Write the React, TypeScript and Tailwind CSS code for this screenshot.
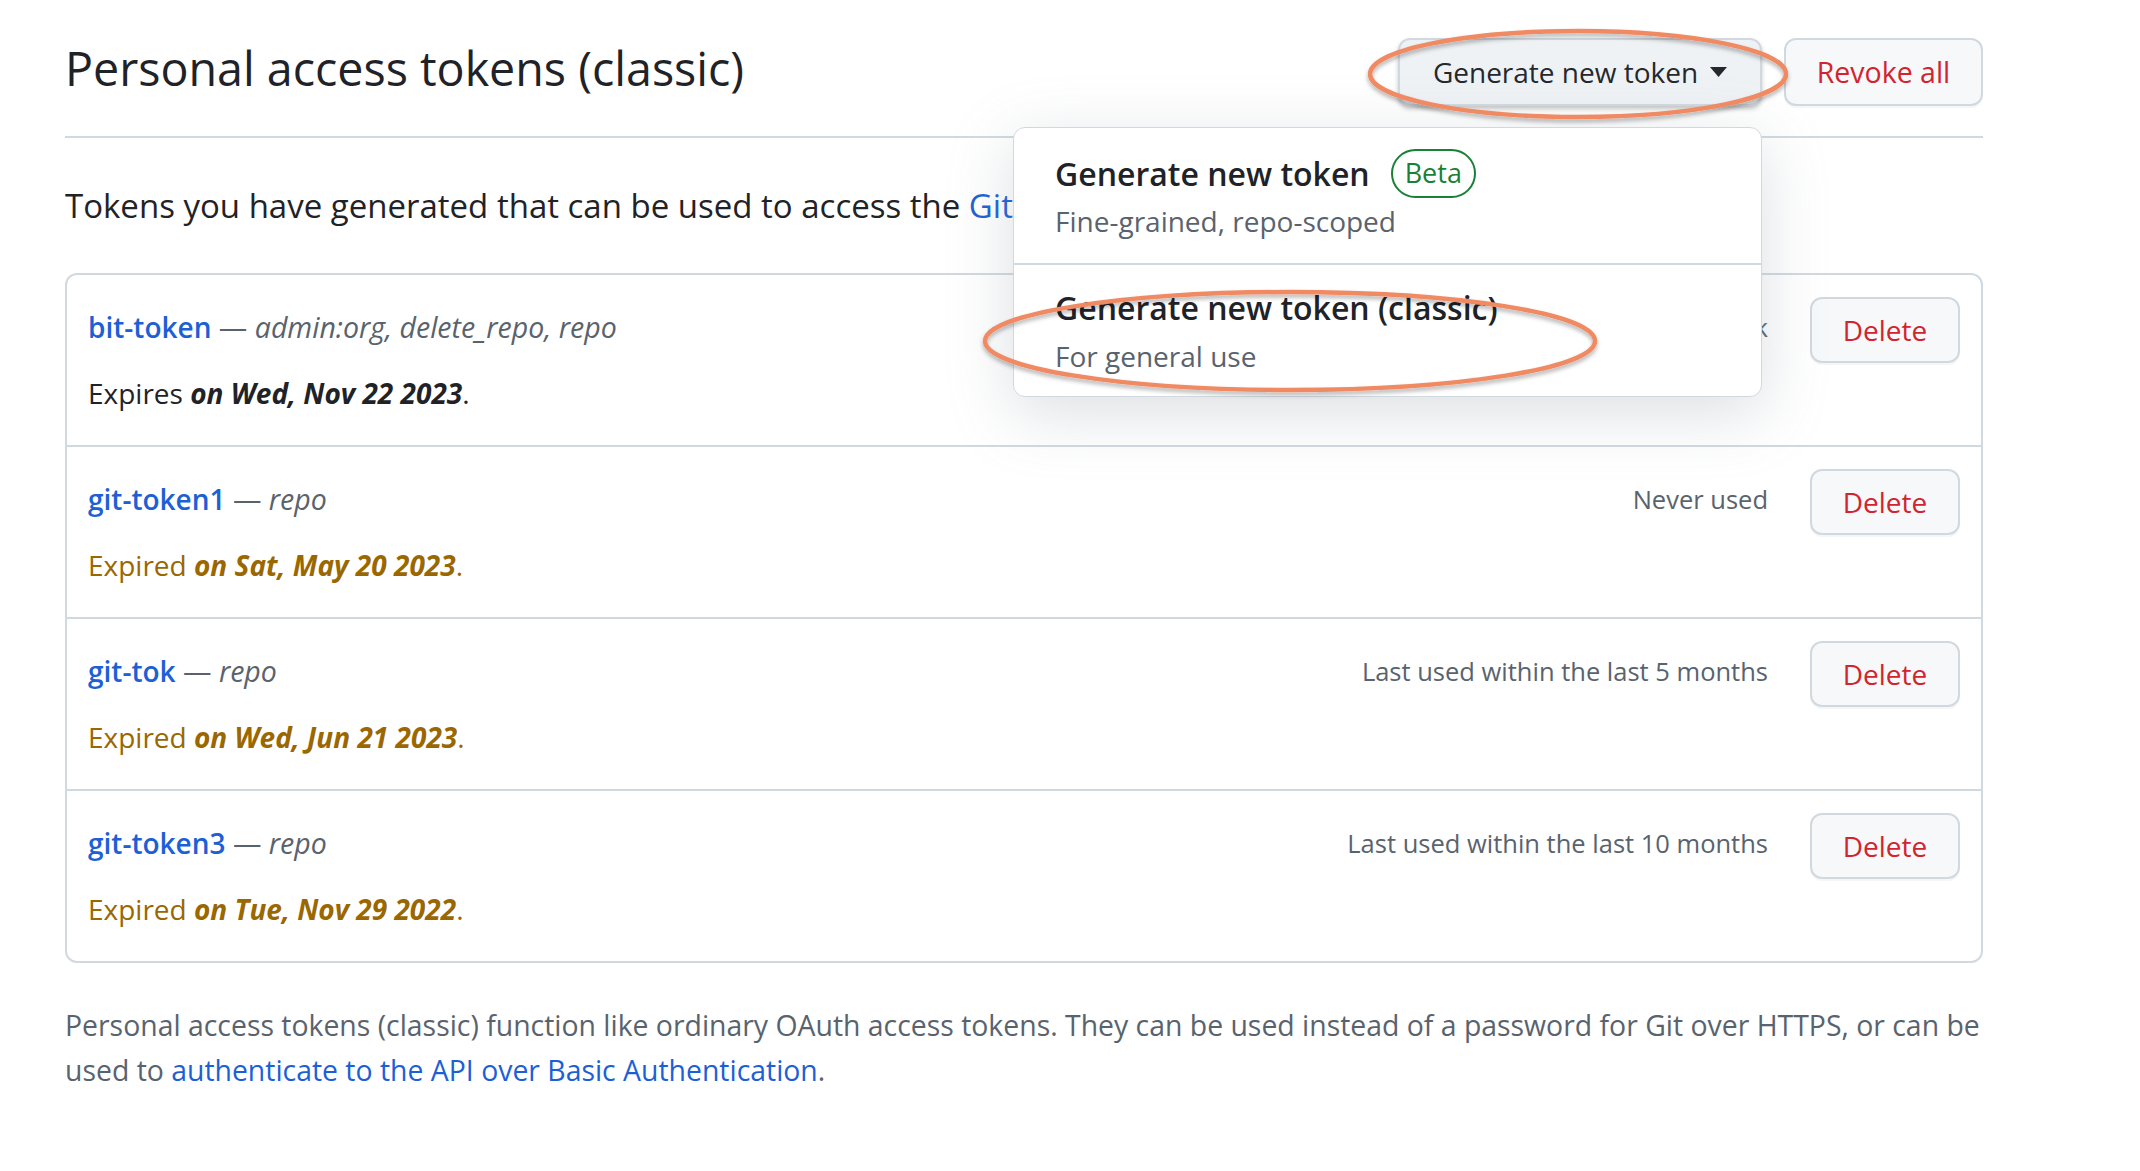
import React from "react";

// Token list data
interface Token {
  name: string;
  scopes: string;
  expired: boolean;
  date: string;
  lastUsed: string;
}

const tokens: Token[] = [
  { name: "bit-token", scopes: "admin:org, delete_repo, repo", expired: false, date: "on Wed, Nov 22 2023", lastUsed: "Last used within the last week" },
  { name: "git-token1", scopes: "repo", expired: true, date: "on Sat, May 20 2023", lastUsed: "Never used" },
  { name: "git-tok", scopes: "repo", expired: true, date: "on Wed, Jun 21 2023", lastUsed: "Last used within the last 5 months" },
  { name: "git-token3", scopes: "repo", expired: true, date: "on Tue, Nov 29 2022", lastUsed: "Last used within the last 10 months" },
];

const Caret = () => (
  <svg width="17" height="10" viewBox="0 0 17 10" aria-hidden="true">
    <path d="M0 0h17L8.5 10z" fill="#25292e" />
  </svg>
);

const TokenRow = ({ token, first }: { token: Token; first: boolean }) => {
  return (
    <div className={first ? "px-[21px] pt-[22px] pb-[31px]" : "px-[21px] pt-[22px] pb-[31px] border-t-2 border-[#d1d9e0]"}>
      <div className="flex h-[66px] items-center justify-between">
        <div className="mb-[6px] text-[28px] leading-[42px]">
          <a className="font-semibold text-[#1c5fd6]">{token.name}</a>
          <span className="text-[28.5px] text-[#59636e]">
            {" — "}
            <em>{token.scopes}</em>
          </span>
        </div>
        <div className="flex items-center gap-[42px]">
          <span className="mb-[6px] text-[25.5px] leading-[42px] text-[#59636e]">{token.lastUsed}</span>
          <button className="h-[66px] w-[150px] rounded-[12px] border-2 border-[#d1d9e0] bg-[#f6f8fa] text-[28px] font-medium text-[#d1242f] shadow-[0_2px_0_rgba(31,35,40,0.04)]">
            Delete
          </button>
        </div>
      </div>
      <div className={token.expired ? "mt-[9px] text-[28px] leading-[42px] text-[#9a6700]" : "mt-[9px] text-[28px] leading-[42px] text-[#1f2328]"}>
        {token.expired ? "Expired " : "Expires "}
        <em className="font-bold">{token.date}</em>.
      </div>
    </div>
  );
};

const GenerateMenu = () => {
  return (
    <div className="absolute right-0 top-[89px] z-10 w-[749px] rounded-[12px] border border-[#d1d9e0] bg-white shadow-[0_16px_64px_rgba(140,149,159,0.3)]">
      <div className="pl-[41px] pr-6 pt-[21px] pb-[21px]">
        <div className="flex h-[49px] items-center gap-[21px]">
          <span className="text-[32px] leading-[48px] font-semibold text-[#1f2328]">Generate new token</span>
          <span className="flex h-[49px] items-center rounded-full border-2 border-[#1a7f37] px-[12px] text-[27px] font-medium text-[#1a7f37]">
            Beta
          </span>
        </div>
        <div className="mt-[2px] text-[28px] leading-[42px] text-[#59636e]">Fine-grained, repo-scoped</div>
      </div>
      <div className="border-t-2 border-[#d1d9e0] pl-[41px] pr-6 pt-[19px] pb-[19px]">
        <div className="text-[32px] leading-[48px] font-semibold text-[#1f2328]">Generate new token (classic)</div>
        <div className="mt-[3px] text-[28px] leading-[42px] text-[#59636e]">For general use</div>
      </div>
    </div>
  );
};

export default function App() {
  return (
    <div className="relative h-[1171px] w-[2140px] overflow-hidden bg-white font-['Open_Sans','Noto_Sans',sans-serif] text-[#1f2328]">
      <div className="ml-[65px] w-[1918px]">
        <div className="flex items-start justify-between border-b-2 border-[#d1d9e0] pt-[38px] pb-[30px]">
          <h1 className="text-[46.6px] leading-[60px] font-normal">Personal access tokens (classic)</h1>
          <div className="flex items-center gap-[22px]">
            <div className="relative">
              <button className="flex h-[68px] w-[364px] items-center justify-center gap-[12px] rounded-[12px] border-2 border-[#d1d9e0] bg-[#eff2f5] text-[28px] font-medium text-[#25292e] shadow-[0_3px_4px_rgba(31,35,40,0.25)]">
                Generate new token
                <Caret />
              </button>
              <GenerateMenu />
            </div>
            <button className="h-[68px] w-[199px] rounded-[12px] border-2 border-[#d1d9e0] bg-[#f6f8fa] text-[28.5px] font-medium text-[#d1242f] shadow-[0_2px_0_rgba(31,35,40,0.04)]">
              Revoke all
            </button>
          </div>
        </div>

        <p className="mt-[44px] text-[33px] leading-[48px]">
          Tokens you have generated that can be used to access the <a className="text-[#1c5fd6]">GitHub API</a>.
        </p>

        <div className="mt-[43px] rounded-[12px] border-2 border-[#d1d9e0]">
          {tokens.map((t, i) => (
            <TokenRow key={t.name} token={t} first={i === 0} />
          ))}
        </div>

        <p className="mt-[40px] whitespace-nowrap text-[28.4px] leading-[45px] text-[#59636e]">
          Personal access tokens (classic) function like ordinary OAuth access tokens. They can be used instead of a password for Git over HTTPS, or can be
          <br />
          used to <a className="text-[#1c5fd6]">authenticate to the API over Basic Authentication</a>.
        </p>
      </div>

      {/* annotation ellipses */}
      <svg className="pointer-events-none absolute left-0 top-0 z-20" width="2140" height="1171" viewBox="0 0 2140 1171">
        <defs>
          <filter id="sh" x="-10%" y="-30%" width="120%" height="160%">
            <feDropShadow dx="0" dy="3" stdDeviation="2" floodColor="#000" floodOpacity="0.3" />
          </filter>
        </defs>
        <ellipse cx="1578" cy="74" rx="208" ry="43" fill="none" stroke="#f08a64" strokeWidth="4.5" filter="url(#sh)" />
        <ellipse cx="1290" cy="341" rx="305" ry="49" fill="none" stroke="#f08a64" strokeWidth="4.5" filter="url(#sh)" />
      </svg>
    </div>
  );
}
